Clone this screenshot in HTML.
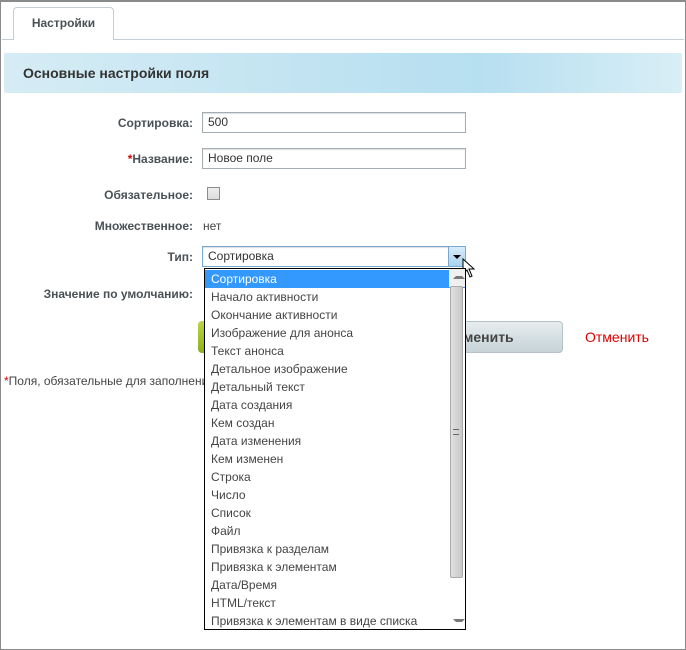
<!DOCTYPE html>
<html><head><meta charset="utf-8"><style>
*{box-sizing:border-box}
body{margin:0;width:686px;height:650px;overflow:hidden;background:#fff;font-family:"Liberation Sans",Arial,sans-serif;font-size:12px;color:#333;position:relative}
.frame{position:absolute;left:0;top:0;width:686px;height:650px;border:1px solid #8a8a8a;border-top:2px solid #8a8a8a}
.abs{position:absolute}
.tab{left:13px;top:7px;width:101px;height:33px;border:1px solid #c3cdd3;border-bottom:none;border-radius:4px 4px 0 0;background:#fff;font-weight:bold;color:#4a5156;text-align:center;line-height:31px;font-size:12px}
.tabline{left:2px;top:39px;width:682px;height:1px;background:#c3cdd3}
.hdr{left:4px;top:53px;width:678px;height:40px;background:linear-gradient(to right,#d6ecf5,#b6dff0 70%,#d9eef6);border-radius:2px;font-weight:bold;font-size:14px;color:#333;line-height:40px;padding-left:19px}
.lbl{right:493px;font-weight:bold;color:#4a5156;text-align:right;white-space:nowrap}
.inp{left:202px;width:264px;height:21px;border:1px solid #a5acb2;padding-left:5px;line-height:19px;font-size:12px;color:#333;box-shadow:inset 0 1px 1px #ddd}
.list{left:204px;top:268px;width:262px;height:362px;border:1px solid #000;background:#fff;font-size:12px;color:#444;padding-top:1px}
.list div{height:18px;line-height:18px;padding-left:6px}
.sb{right:0;top:0;width:16px;height:360px;background:#f0f0f0}
</style></head><body>
<div class="frame"></div>
<div class="abs tabline"></div>
<div class="abs tab">Настройки</div>
<div class="abs hdr">Основные настройки поля</div>

<div class="abs lbl" style="top:116px">Сортировка:</div>
<div class="abs inp" style="top:112px">500</div>
<div class="abs lbl" style="top:152px"><span style="color:#d00">*</span>Название:</div>
<div class="abs inp" style="top:148px">Новое поле</div>
<div class="abs lbl" style="top:188px">Обязательное:</div>
<div class="abs" style="left:207px;top:187px;width:13px;height:13px;border:1px solid #8d8d8d;background:linear-gradient(#eee,#ddd)"></div>
<div class="abs lbl" style="top:219px">Множественное:</div>
<div class="abs" style="left:203px;top:219px;color:#444">нет</div>
<div class="abs lbl" style="top:250px">Тип:</div>
<div class="abs inp" style="top:246px;border-color:#7aa7d0;padding-left:5px">Сортировка</div>
<div class="abs" style="left:448px;top:247px;width:17px;height:19px;background:linear-gradient(#d8ecf9,#a9d2ef);border-left:1px solid #7aa7d0"></div>
<div class="abs" style="left:453px;top:255px;width:0;height:0;border-left:4px solid transparent;border-right:4px solid transparent;border-top:4px solid #000"></div>
<svg class="abs" style="left:462px;top:258px" width="14" height="22"><path d="M1 1 L1 16 L5 12 L8 19 L10 18 L7 11 L12 11 Z" fill="#fff" stroke="#000" stroke-width="1"/></svg>
<div class="abs lbl" style="top:287px">Значение по умолчанию:</div>

<div class="abs" style="left:198px;top:321px;width:12px;height:32px;background:linear-gradient(#bcd544,#8db018);border-radius:4px 0 0 4px"></div>
<div class="abs" style="left:440px;top:321px;width:123px;height:32px;background:linear-gradient(#e6edef,#c6d3d7);border-radius:0 4px 4px 0;border:1px solid #b5c2c6;font-weight:bold;font-size:14px;color:#444;line-height:30px;padding-left:22px">менить</div>
<div class="abs" style="left:585px;top:329px;color:#d00;font-size:14px">Отменить</div>
<div class="abs" style="left:4px;top:374px;color:#444;font-size:12px"><span style="color:#d00">*</span>Поля, обязательные для заполнения</div>

<div class="abs list">
<div style="background:#3399ff;color:#fff">Сортировка</div>
<div>Начало активности</div><div>Окончание активности</div><div>Изображение для анонса</div><div>Текст анонса</div><div>Детальное изображение</div><div>Детальный текст</div><div>Дата создания</div><div>Кем создан</div><div>Дата изменения</div><div>Кем изменен</div><div>Строка</div><div>Число</div><div>Список</div><div>Файл</div><div>Привязка к разделам</div><div>Привязка к элементам</div><div>Дата/Время</div><div>HTML/текст</div><div>Привязка к элементам в виде списка</div>
<div class="abs sb">
<div class="abs" style="left:4px;top:7px;width:0;height:0;border-left:3px solid transparent;border-right:3px solid transparent;border-bottom:3px solid #777"></div>
<div class="abs" style="left:1px;top:17px;width:13px;height:292px;background:linear-gradient(to right,#e0e0e0,#c8c8c8);border:1px solid #aaa;border-radius:2px"></div>
<div class="abs" style="left:4px;top:160px;width:6px;height:6px;border-top:1px solid #666;border-bottom:1px solid #666"></div>
<div class="abs" style="left:4px;top:350px;width:0;height:0;border-left:3px solid transparent;border-right:3px solid transparent;border-top:3px solid #777"></div>
</div>
</div>
</body></html>
